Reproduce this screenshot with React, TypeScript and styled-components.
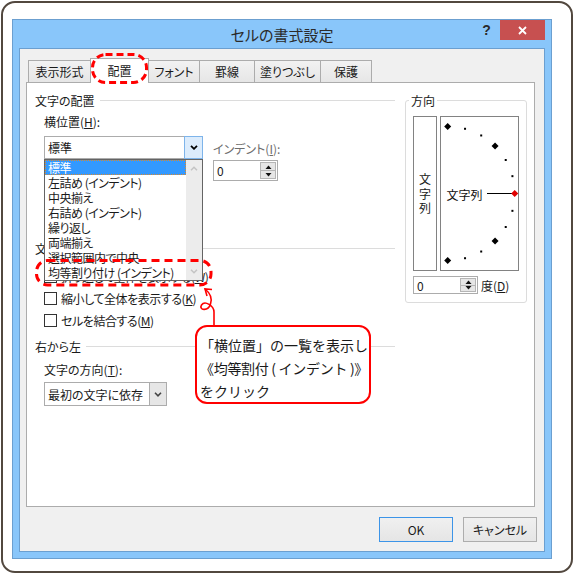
import React from "react";
import styled, { createGlobalStyle } from "styled-components";

const GlobalStyle = createGlobalStyle`
  html, body { margin: 0; padding: 0; background: #fff; }
  body {
    font-family: "Noto Sans CJK JP", "Noto Sans", sans-serif;
    font-size: 12px;
    color: #1a1a1a;
    font-feature-settings: "palt";
  }
  * { box-sizing: border-box; }
`;

const Page = styled.div`
  position: relative;
  width: 575px;
  height: 575px;
  padding: 1px;
  background: #fff;
`;

const Frame = styled.div`
  width: 572px;
  height: 572px;
  border: 2px solid #52483f;
  border-radius: 14px;
  padding: 16px 0 0 9px;
`;

const Window = styled.div`
  width: 540px;
  height: 540px;
  border: 1px solid #6b9fd0;
  background: #89c6fa;
  padding: 0 6px 6px;
  display: flex;
  flex-direction: column;
`;

const TitleBar = styled.div`
  height: 28px;
  display: grid;
  grid-template-columns: 1fr auto 1fr;
  align-items: start;
`;

const Title = styled.div`
  grid-column: 2;
  font-size: 15px;
  line-height: 28px;
  padding-top: 1px;
  color: #2b2b2b;
`;

const Controls = styled.div`
  grid-column: 3;
  justify-self: end;
  display: flex;
`;

const HelpButton = styled.div`
  width: 27px;
  height: 20px;
  font: bold 14px "Liberation Sans", Arial, sans-serif;
  line-height: 21px;
  text-align: center;
  color: #2a2a2a;
`;

const CloseButton = styled.div`
  width: 45px;
  height: 20px;
  background: #c75050;
  display: flex;
  align-items: center;
  justify-content: center;
`;

const Client = styled.div`
  flex: 1;
  border: 1px solid #6b9fd0;
  background: #f0f0f0;
  padding: 9px 7px 0 6px;
  display: flex;
  flex-direction: column;
`;

const TabStrip = styled.div`
  display: flex;
  align-items: flex-end;
  height: 25px;
  margin: 0 0 -1px 2px;
  position: relative;
  z-index: 1;
`;

const Tab = styled.div<{ $w: number; $active?: boolean }>`
  position: relative;
  z-index: ${(p) => (p.$active ? 2 : 1)};
  width: ${(p) => p.$w}px;
  height: ${(p) => (p.$active ? 25 : 22)}px;
  margin-bottom: ${(p) => (p.$active ? 0 : 1)}px;
  margin-left: -1px;
  border: 1px solid #acacac;
  border-bottom: none;
  background: ${(p) => (p.$active ? "#fff" : "linear-gradient(#f2f2f2, #e6e6e6)")};
  display: flex;
  align-items: center;
  justify-content: center;
  padding-bottom: ${(p) => (p.$active ? 2 : 0)}px;
  font-size: 12px;
  &:first-child { margin-left: 0; }
`;

const Panel = styled.div`
  height: 425px;
  border: 1px solid #acacac;
  background: #fff;
  margin-right: 2px;
  padding: 9px 7px 0 8px;
  display: flex;
  gap: 10px;
`;

const LeftColumn = styled.div`
  width: 360px;
  display: flex;
  flex-direction: column;
`;

const GroupHeader = styled.div<{ $mt?: number }>`
  display: flex;
  align-items: center;
  height: 17px;
  line-height: 17px;
  margin-top: ${(p) => p.$mt ?? 0}px;
  &::after {
    content: "";
    flex: 1;
    height: 1px;
    background: #dcdcdc;
    margin-left: 5px;
  }
`;

const FieldLabel = styled.div<{ $mt: number; $disabled?: boolean }>`
  line-height: 16px;
  margin-top: ${(p) => p.$mt}px;
  color: ${(p) => (p.$disabled ? "#6d6d6d" : "inherit")};
`;

const Indented = styled.div<{ $mt?: number }>`
  padding-left: 9px;
  margin-top: ${(p) => p.$mt ?? 0}px;
`;

const ComboRow = styled.div`
  display: flex;
  align-items: flex-start;
  margin-top: 6px;
  padding-left: 9px;
`;

const Combo = styled.div<{ $w: number; $h: number }>`
  position: relative;
  width: ${(p) => p.$w}px;
  height: ${(p) => p.$h}px;
  border: 1px solid #acacac;
  background: #fff;
  display: flex;
`;

const ComboText = styled.div`
  flex: 1;
  padding-left: 3px;
  display: flex;
  align-items: center;
`;

const ComboButton = styled.div<{ $focus?: boolean }>`
  width: ${(p) => (p.$focus ? 19 : 17)}px;
  margin: ${(p) => (p.$focus ? "-1px -1px -1px 0" : "0")};
  border: 1px solid ${(p) => (p.$focus ? "#7eb4ea" : "#acacac")};
  border-width: ${(p) => (p.$focus ? "1px" : "0 0 0 1px")};
  background: ${(p) => (p.$focus ? "#dcecfc" : "#e6e6e6")};
  display: flex;
  align-items: center;
  justify-content: center;
`;

const DropList = styled.div`
  position: absolute;
  top: 22px;
  left: -1px;
  width: 159px;
  height: 122px;
  border: 1px solid #646464;
  background: #fff;
  display: flex;
  z-index: 5;
`;

const ListItems = styled.div`
  flex: 1;
  display: flex;
  flex-direction: column;
`;

const ListItem = styled.div<{ $selected?: boolean }>`
  height: 15px;
  line-height: 13px;
  padding-left: 2px;
  white-space: nowrap;
  letter-spacing: -0.5px;
  border: 1px ${(p) => (p.$selected ? "dotted #d9892e" : "solid transparent")};
  background: ${(p) => (p.$selected ? "#3399ff" : "transparent")};
  color: ${(p) => (p.$selected ? "#fff" : "#1a1a1a")};
`;

const ScrollBar = styled.div`
  width: 16px;
  background: #ececec;
  display: flex;
  flex-direction: column;
  justify-content: space-between;
`;

const ScrollArrow = styled.div`
  height: 17px;
  display: flex;
  align-items: center;
  justify-content: center;
`;

const IndentBlock = styled.div`
  margin-left: 10px;
  padding-top: 5px;
`;

const Spin = styled.div<{ $w: number; $h: number; $mt?: number }>`
  width: ${(p) => p.$w}px;
  height: ${(p) => p.$h}px;
  margin-top: ${(p) => p.$mt ?? 0}px;
  border: 1px solid #acacac;
  background: #fff;
  display: flex;
  align-items: stretch;
`;

const SpinValue = styled.div`
  flex: 1;
  padding-left: 3px;
  display: flex;
  align-items: center;
`;

const SpinButtons = styled.div`
  width: 17px;
  padding: 1px 1px 1px 0;
  display: flex;
  flex-direction: column;
`;

const SpinHalf = styled.div`
  flex: 1;
  background: #e6e6e6;
  border: 1px solid #b5b5b5;
  display: flex;
  align-items: center;
  justify-content: center;
  & + & { margin-top: -1px; }
`;

const CheckList = styled.div`
  margin-top: 8px;
  display: flex;
  flex-direction: column;
`;

const CheckRow = styled.div`
  display: flex;
  align-items: center;
  height: 22px;
  padding-left: 9px;
  gap: 4px;
  white-space: nowrap;
  letter-spacing: -0.45px;
`;

const CheckBox = styled.span`
  width: 13px;
  height: 13px;
  border: 1px solid #333;
  background: #fff;
  flex: none;
`;

const GroupBox = styled.fieldset`
  margin: 0;
  width: 122px;
  min-width: 0;
  height: 211px;
  border: 1px solid #dcdcdc;
  border-radius: 3px;
  padding: 7px 7px 8px;
`;

const Legend = styled.legend`
  padding: 0 2px;
  margin-left: -4px;
  line-height: 17px;
  font-size: 12px;
`;

const OrientRow = styled.div`
  display: flex;
  gap: 3px;
  height: 155px;
`;

const VerticalBox = styled.div`
  width: 24px;
  border: 1px solid #828282;
  display: flex;
  flex-direction: column;
  align-items: center;
  justify-content: center;
  line-height: 14.5px;
  padding-top: 1px;
`;

const DialBox = styled.div`
  width: 79px;
  border: 1px solid #828282;
`;

const DegreeRow = styled.div`
  display: flex;
  align-items: center;
  gap: 3px;
  margin-top: 5px;
`;

const ButtonRow = styled.div`
  display: flex;
  justify-content: flex-end;
  gap: 10px;
  margin-top: 10px;
`;

const DialogButton = styled.div<{ $default?: boolean }>`
  width: 74px;
  height: 25px;
  border: 1px solid ${(p) => (p.$default ? "#3c94e8" : "#adadad")};
  background: linear-gradient(#f0f0f0, #e5e5e5);
  display: flex;
  align-items: center;
  justify-content: center;
  font-size: 12px;
`;

const Overlay = styled.svg`
  position: absolute;
  left: 0;
  top: 0;
  z-index: 10;
  pointer-events: none;
`;

const Callout = styled.div`
  position: absolute;
  left: 195px;
  top: 325px;
  width: 176px;
  height: 79px;
  z-index: 11;
  border: 2px solid #ff0000;
  border-radius: 12px;
  background: #fff;
  padding: 7px 0 0 3px;
  font-size: 14px;
  line-height: 23px;
  color: #1a1a1a;
  font-feature-settings: normal;
  white-space: nowrap;
`;

const CalloutLine = styled.div<{ $tight?: boolean }>`
  letter-spacing: ${(p) => (p.$tight ? "-0.3px" : "0")};
`;

const Chevron = ({ color = "#000", w = 1.8 }: { color?: string; w?: number }) => (
  <svg width="8" height="5" viewBox="0 0 8 5">
    <path d="M1 0.8 L4 3.8 L7 0.8" stroke={color} strokeWidth={w} fill="none" />
  </svg>
);

const ChevronUp = ({ color }: { color: string }) => (
  <svg width="8" height="5" viewBox="0 0 8 5">
    <path d="M1 4.2 L4 1.2 L7 4.2" stroke={color} strokeWidth={1.5} fill="none" />
  </svg>
);

const Tri = ({ up }: { up?: boolean }) => (
  <svg width="7" height="4" viewBox="0 0 7 4">
    <path d={up ? "M0.5 4 L3.5 0.5 L6.5 4 Z" : "M0.5 0 L3.5 3.5 L6.5 0 Z"} fill="#111" />
  </svg>
);

const SpinBox = ({ w, h, mt }: { w: number; h: number; mt?: number }) => (
  <Spin $w={w} $h={h} $mt={mt}>
    <SpinValue>0</SpinValue>
    <SpinButtons>
      <SpinHalf>
        <Tri up />
      </SpinHalf>
      <SpinHalf>
        <Tri />
      </SpinHalf>
    </SpinButtons>
  </Spin>
);

const Dial = () => {
  const cx = 6.7;
  const cy = 76.5;
  const r = 67;
  const angles = [90, 75, 60, 45, 30, 15, 0, -15, -30, -45, -60, -75, -90];
  return (
    <svg width="77" height="153" viewBox="0 0 77 153">
      <text
        x="5.5"
        y="77"
        fontSize="12"
        dominantBaseline="central"
        fill="#111"
        fontFamily='"Noto Sans CJK JP", sans-serif'
      >
        文字列
      </text>
      <line x1="46" y1="76.5" x2="71" y2="76.5" stroke="#000" strokeWidth="1" />
      {angles.map((a) => {
        const rad = (a * Math.PI) / 180;
        const x = cx + r * Math.cos(rad);
        const y = cy - r * Math.sin(rad);
        const big = a % 45 === 0;
        if (big) {
          const s = 3.5;
          return (
            <polygon
              key={a}
              points={`${x},${y - s} ${x + s},${y} ${x},${y + s} ${x - s},${y}`}
              fill={a === 0 ? "#e00000" : "#000"}
            />
          );
        }
        return <rect key={a} x={x - 1} y={y - 1} width="2" height="2" fill="#000" />;
      })}
    </svg>
  );
};

const items = [
  "標準",
  "左詰め (インデント)",
  "中央揃え",
  "右詰め (インデント)",
  "繰り返し",
  "両端揃え",
  "選択範囲内で中央",
  "均等割り付け (インデント)",
];

const tabs: [string, number][] = [
  ["表示形式", 63],
  ["配置", 59],
  ["フォント", 52],
  ["罫線", 56],
  ["塗りつぶし", 67],
  ["保護", 52],
];

export default function App() {
  return (
    <Page>
      <GlobalStyle />
      <Frame>
        <Window>
          <TitleBar>
            <Title>セルの書式設定</Title>
            <Controls>
              <HelpButton>?</HelpButton>
              <CloseButton>
                <svg width="9" height="9" viewBox="0 0 9 9">
                  <path d="M1 1 L8 8 M8 1 L1 8" stroke="#fff" strokeWidth="1.8" />
                </svg>
              </CloseButton>
            </Controls>
          </TitleBar>
          <Client>
            <TabStrip>
              {tabs.map(([t, w]) => (
                <Tab key={t} $w={w} $active={t === "配置"}>
                  {t}
                </Tab>
              ))}
            </TabStrip>
            <Panel>
              <LeftColumn>
                <GroupHeader>文字の配置</GroupHeader>
                <Indented $mt={5}>
                  <FieldLabel $mt={0}>
                    横位置(<u>H</u>):
                  </FieldLabel>
                </Indented>
                <ComboRow>
                  <Combo $w={159} $h={23}>
                    <ComboText>標準</ComboText>
                    <ComboButton $focus>
                      <Chevron />
                    </ComboButton>
                    <DropList>
                      <ListItems>
                        {items.map((it, i) => (
                          <ListItem key={it} $selected={i === 0}>
                            {it}
                          </ListItem>
                        ))}
                      </ListItems>
                      <ScrollBar>
                        <ScrollArrow>
                          <ChevronUp color="#c4c4c4" />
                        </ScrollArrow>
                        <ScrollArrow>
                          <Chevron color="#c4c4c4" w={1.5} />
                        </ScrollArrow>
                      </ScrollBar>
                    </DropList>
                  </Combo>
                  <IndentBlock>
                    <FieldLabel $mt={0} $disabled>
                      インデント(<u>I</u>):
                    </FieldLabel>
                    <SpinBox w={65} h={21} mt={3} />
                  </IndentBlock>
                </ComboRow>

                <GroupHeader $mt={59}>文字の制御</GroupHeader>
                <CheckList>
                  <CheckRow>
                    <CheckBox />
                    <span>
                      折り返して全体を表示する(<u>W</u>)
                    </span>
                  </CheckRow>
                  <CheckRow>
                    <CheckBox />
                    <span>
                      縮小して全体を表示する(<u>K</u>)
                    </span>
                  </CheckRow>
                  <CheckRow>
                    <CheckBox />
                    <span>
                      セルを結合する(<u>M</u>)
                    </span>
                  </CheckRow>
                </CheckList>

                <GroupHeader $mt={7}>右から左</GroupHeader>
                <Indented $mt={7}>
                  <FieldLabel $mt={0}>
                    文字の方向(<u>T</u>):
                  </FieldLabel>
                </Indented>
                <Indented $mt={4}>
                  <Combo $w={123} $h={24}>
                    <ComboText>最初の文字に依存</ComboText>
                    <ComboButton>
                      <Chevron color="#444" w={1.6} />
                    </ComboButton>
                  </Combo>
                </Indented>
              </LeftColumn>

              <GroupBox>
                <Legend>方向</Legend>
                <OrientRow>
                  <VerticalBox>
                    <span>文</span>
                    <span>字</span>
                    <span>列</span>
                  </VerticalBox>
                  <DialBox>
                    <Dial />
                  </DialBox>
                </OrientRow>
                <DegreeRow>
                  <SpinBox w={65} h={18} />
                  <span>
                    度(<u>D</u>)
                  </span>
                </DegreeRow>
              </GroupBox>
            </Panel>
            <ButtonRow>
              <DialogButton $default>OK</DialogButton>
              <DialogButton>キャンセル</DialogButton>
            </ButtonRow>
          </Client>
        </Window>
      </Frame>

      <Overlay width="575" height="575" viewBox="0 0 575 575">
        <rect
          x="92.5"
          y="54.5"
          width="54"
          height="28"
          rx="13"
          fill="none"
          stroke="#ff0000"
          strokeWidth="3"
          strokeDasharray="7 4"
        />
        <rect
          x="36.5"
          y="260.5"
          width="174.5"
          height="24.5"
          rx="11"
          fill="none"
          stroke="#ff0000"
          strokeWidth="3"
          strokeDasharray="8 5"
        />
        <path
          d="M214 326 L214 312 C214 306 205 300 201.5 305 C198.5 310 208 312 210.5 304 C212.5 298 210 293 205 289"
          fill="none"
          stroke="#ff0000"
          strokeWidth="1.6"
        />
        <path d="M207 296 L205 289 L212 289.5" fill="none" stroke="#ff0000" strokeWidth="1.6" />
      </Overlay>

      <Callout>
        <CalloutLine>「横位置」の一覧を表示し</CalloutLine>
        <CalloutLine $tight>《均等割付 ( インデント )》</CalloutLine>
        <CalloutLine>をクリック</CalloutLine>
      </Callout>
    </Page>
  );
}
